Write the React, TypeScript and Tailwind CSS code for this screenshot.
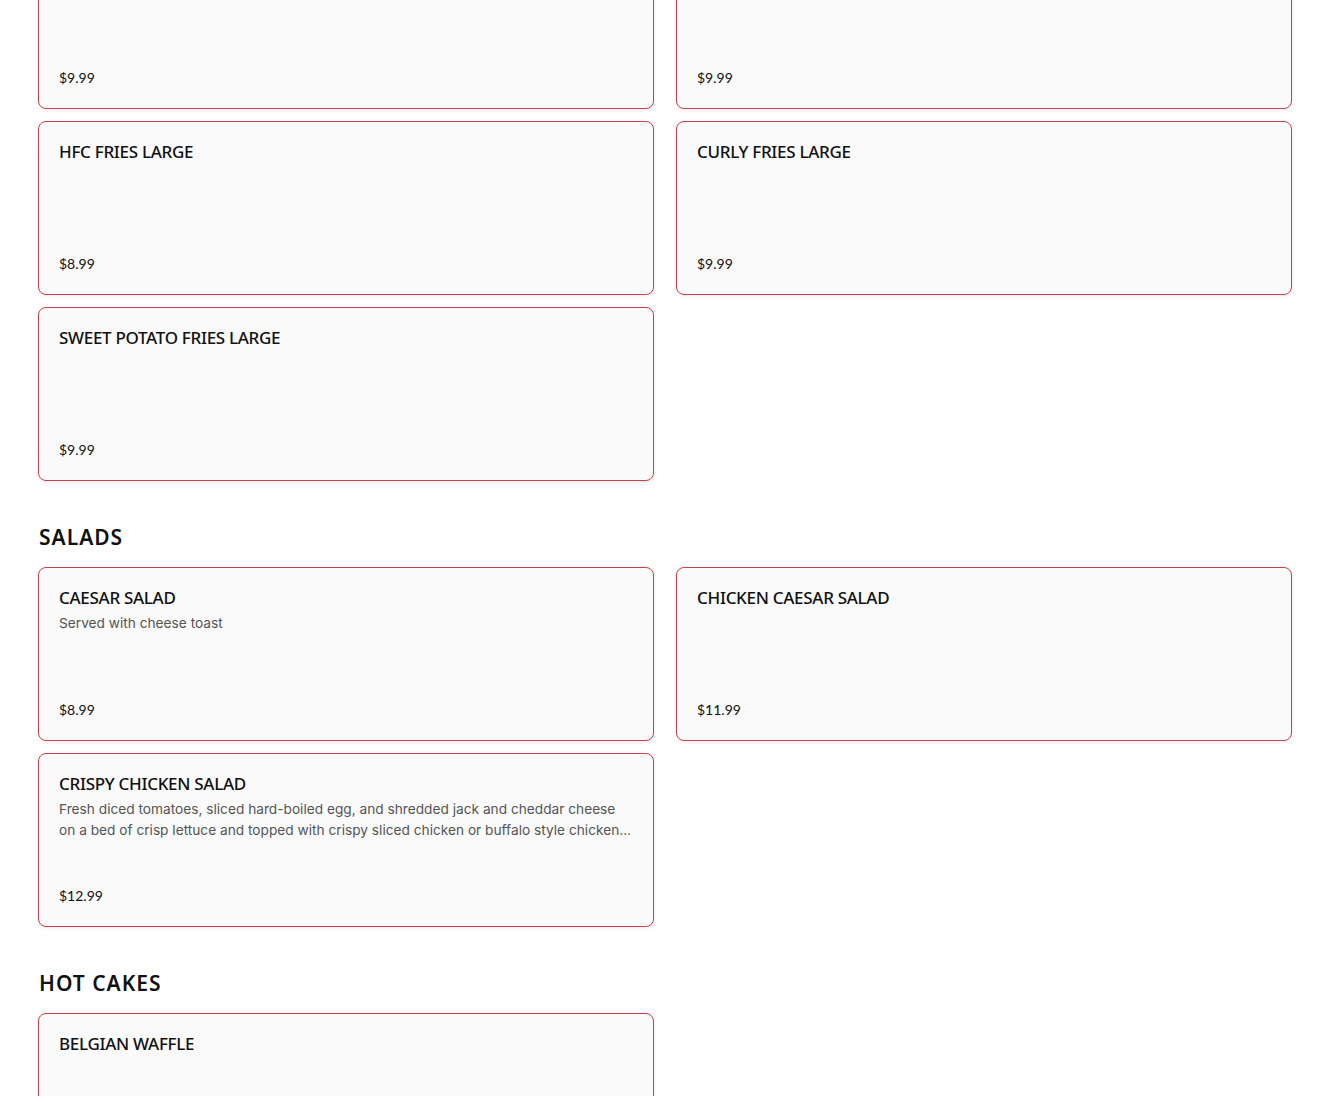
const SECTIONS = [
  {
    title: '',
    items: [
      { name: '', price: '$9.99' },
      { name: '', price: '$9.99' },
      { name: 'HFC FRIES LARGE', price: '$8.99' },
      { name: 'CURLY FRIES LARGE', price: '$9.99' },
      { name: 'SWEET POTATO FRIES LARGE', price: '$9.99' },
    ],
  },
  {
    title: 'SALADS',
    items: [
      { name: 'CAESAR SALAD', desc: 'Served with cheese toast', price: '$8.99' },
      { name: 'CHICKEN CAESAR SALAD', price: '$11.99' },
      {
        name: 'CRISPY CHICKEN SALAD',
        desc: 'Fresh diced tomatoes, sliced hard-boiled egg, and shredded jack and cheddar cheese on a bed of crisp lettuce and topped with crispy sliced chicken or buffalo style chicken tenders.',
        price: '$12.99',
      },
    ],
  },
  {
    title: 'HOT CAKES',
    items: [{ name: 'BELGIAN WAFFLE', price: '$8.99' }],
  },
];

type Item = { name: string; desc?: string; price: string };

function MenuCard({ item }: { item: Item }) {
  return (
    <div className="h-[174px] flex flex-col justify-between rounded-lg border border-[#c9414c] bg-[#fafafa] px-5 pt-[18px] pb-[19px] shadow-[0_1px_4px_rgba(200,60,70,0.12)]">
      <div>
        <div className="h-6 text-[17px] leading-6 font-medium tracking-[-0.3px] text-[#111] font-['Noto_Sans',sans-serif]">{item.name}</div>
        {item.desc && (
          <p className="mt-[3px] text-[13.7px] leading-[21px] text-[#555] font-['Inter',sans-serif] line-clamp-2">
            {item.desc}
          </p>
        )}
      </div>
      <div className="text-[14px] leading-[22px] text-[#111] font-['Lato',sans-serif]">{item.price}</div>
    </div>
  );
}

export default function App() {
  return (
    <div className="h-[1096px] overflow-hidden bg-white">
      <div className="px-[38px] mt-[-65px]">
        {SECTIONS.map((s, i) => (
          <section key={i} className={i > 0 ? 'mt-[41px]' : ''}>
            {s.title && (
              <h2 className="mb-[15px] ml-px text-[21px] leading-[30px] font-semibold tracking-[1px] text-[#111] font-['Noto_Sans',sans-serif]">
                {s.title}
              </h2>
            )}
            <div className="grid grid-cols-2 gap-x-[22px] gap-y-3">
              {s.items.map((it, j) => (
                <MenuCard key={j} item={it} />
              ))}
            </div>
          </section>
        ))}
      </div>
    </div>
  );
}
